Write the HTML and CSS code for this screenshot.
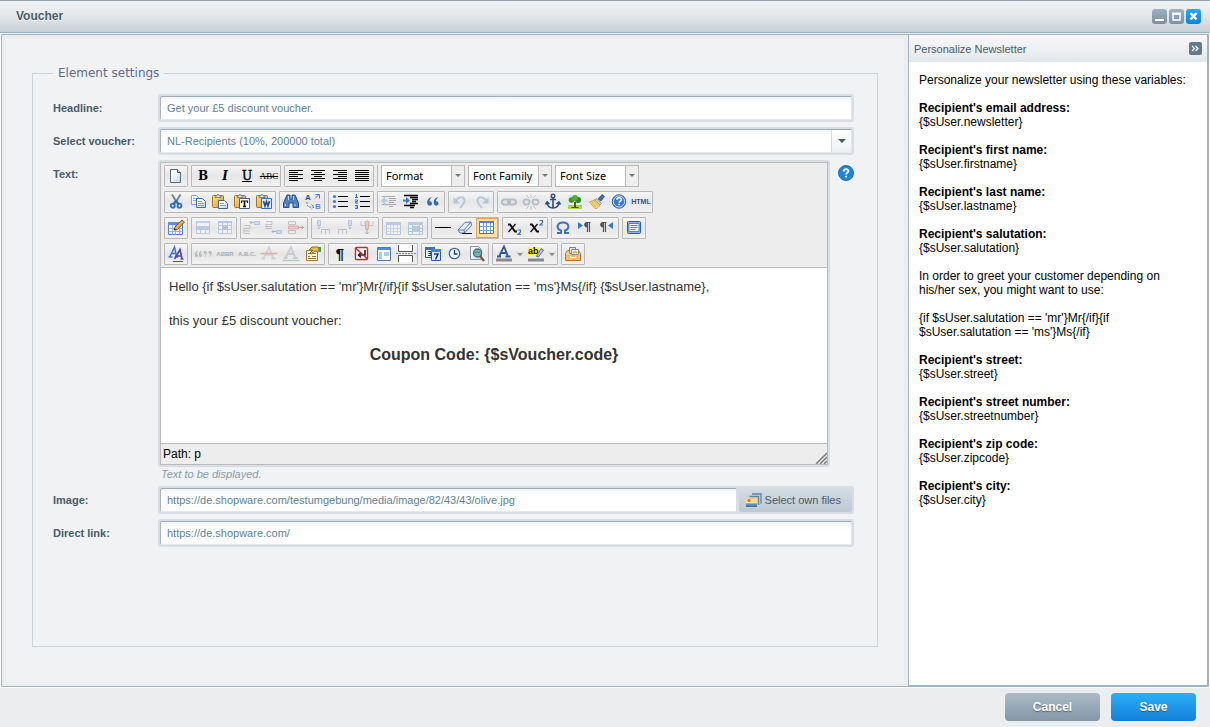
FILE: index.html
```html
<!DOCTYPE html>
<html lang="en">
<head>
<meta charset="utf-8">
<title>Voucher</title>
<link rel="stylesheet" href="styles.css">
</head>
<body>
<svg class="sprite" aria-hidden="true">
  <defs>
    <linearGradient id="g-page" x1="0" y1="0" x2="1" y2="1"><stop offset=".3" stop-color="#fff"/><stop offset="1" stop-color="#bdd3ea"/></linearGradient>
    <linearGradient id="g-sky" x1="0" y1="0" x2="0" y2="1"><stop offset="0" stop-color="#ffd24f"/><stop offset=".55" stop-color="#ffe9a8"/><stop offset=".6" stop-color="#6d9bd0"/><stop offset="1" stop-color="#3c6fae"/></linearGradient>
    <linearGradient id="g-clip" x1="0" y1="0" x2="1" y2="1"><stop offset="0" stop-color="#ffe28a"/><stop offset="1" stop-color="#d9982a"/></linearGradient>
    <symbol id="clipboard" viewBox="0 0 20 20"><rect x="2.500" y="3.500" width="11" height="12" rx="1" fill="url(#g-clip)" stroke="#a07424"/><path d="M5 5.500V4h1.500L8 2l1.500 2H11v1.500z" fill="#ddd" stroke="#777" stroke-width=".8"/></symbol>
    <symbol id="grid" viewBox="0 0 20 20"><path d="M2.500 4.500h14v12h-14z" fill="#fff" stroke="#4a7fc1"/><path d="M2 4h15v3H2z" fill="#5b8fd6"/><path d="M2.500 10.500h14M2.500 13.500h14M6.500 7v9.500M9.500 7v9.500M13.500 7v9.500" stroke="#8fb2e0" fill="none"/></symbol>
  </defs>
  <symbol id="i-new" viewBox="0 0 20 20"><path d="M4.500 3.500h7l3 3v10h-10z" fill="url(#g-page)" stroke="#536b88"/><path d="M11.500 3.500v3h3" fill="#fff" stroke="#344c69"/></symbol>
  <symbol id="i-left" viewBox="0 0 20 20"><path d="M3 4.500h14M3 6.500h9M3 8.500h14M3 10.500h9M3 12.500h14M3 14.500h9" stroke="#000"/></symbol>
  <symbol id="i-center" viewBox="0 0 20 20"><path d="M3 4.500h14M6 6.500h8M3 8.500h14M6 10.500h8M3 12.500h14M6 14.500h8" stroke="#000"/></symbol>
  <symbol id="i-right" viewBox="0 0 20 20"><path d="M3 4.500h14M8 6.500h9M3 8.500h14M8 10.500h9M3 12.500h14M8 14.500h9" stroke="#000"/></symbol>
  <symbol id="i-full" viewBox="0 0 20 20"><path d="M3 4.500h14M3 6.500h14M3 8.500h14M3 10.500h14M3 12.500h14M3 14.500h14" stroke="#000"/></symbol>
  <symbol id="i-cut" viewBox="0 0 20 20"><path d="M6 2.500l5.500 9M14.500 2.500L9 11.500" stroke="#7a8794" stroke-width="2" fill="none"/><path d="M10 8.500l3 4M10 8.500l-3 4" stroke="#2b6fb6" stroke-width="2"/><circle cx="6.800" cy="13.700" r="2" fill="none" stroke="#2b6fb6" stroke-width="1.800"/><circle cx="13.500" cy="13.700" r="2" fill="none" stroke="#2b6fb6" stroke-width="1.800"/></symbol>
  <symbol id="i-copy" viewBox="0 0 20 20"><path d="M3.500 3.500h5l3 3v6h-8z" fill="url(#g-page)" stroke="#7da3d8"/><path d="M5 6.500h4M5 8.500h4" stroke="#86aade"/><path d="M8.500 6.500h6l3 3v6h-9z" fill="url(#g-page)" stroke="#3a6cb5"/><path d="M10 9.500h4M10 11.500h6M10 13.500h6" stroke="#6f9bd8"/></symbol>
  <symbol id="i-paste" viewBox="0 0 20 20"><use href="#clipboard"/><path d="M8.500 8.500h6l3 3v5h-9z" fill="url(#g-page)" stroke="#48617c"/><path d="M10 11.500h4M10 13.500h6" stroke="#8aa3bf"/></symbol>
  <symbol id="i-pastetext" viewBox="0 0 20 20"><use href="#clipboard"/><path d="M7.500 6.500h10v10h-10z" fill="#fff" stroke="#48617c"/><path d="M9 9h7M9.500 8.500v2.500M15.500 8.500v2.500" stroke="#111" stroke-width="1.200"/><path d="M12.500 9v6M11 14.500h3" stroke="#111" stroke-width="1.600"/></symbol>
  <symbol id="i-pasteword" viewBox="0 0 20 20"><use href="#clipboard"/><path d="M7.500 6.500h10v10h-10z" fill="#dcecff" stroke="#3a6cb5"/><path d="M9.500 9l1.500 5 1.500-4.500L14 14l1.500-5" stroke="#1c4f9c" stroke-width="1.600" fill="none"/></symbol>
  <symbol id="i-find" viewBox="0 0 20 20"><path d="M6 3h3v4h2V3h3l3.500 8v4.500h-5.500V11h-4v4.500H2.500V11z" fill="#4d80c4" stroke="#264f8e"/><path d="M4.500 12v2M14 12v2M7.500 4v4M12.500 4v4" stroke="#c7ddf7"/></symbol>
  <symbol id="i-bullets" viewBox="0 0 20 20"><path d="M8 4.500h10M8 9.500h10M8 14.500h10" stroke="#000"/><circle cx="4.500" cy="4.500" r="1.600" fill="#4777c5"/><circle cx="4.500" cy="9.500" r="1.600" fill="#4777c5"/><circle cx="4.500" cy="14.500" r="1.600" fill="#4777c5"/></symbol>
  <symbol id="i-numbers" viewBox="0 0 20 20"><path d="M8 4.500h10M8 9.500h10M8 14.500h10" stroke="#000"/><path d="M4.500 2v4M3.500 3h1M3 5.500h3M3 8h2.500v1.500H3.500V11H6M3 13.500h2.500v3H3M3.500 15h2" stroke="#3c70c8" fill="none"/></symbol>
  <symbol id="i-outdent" viewBox="0 0 20 20"><path d="M3 4.500h13M10 6.500h7M10 8.500h7M10 10.500h5M3 12.500h14M10 14.500h4" stroke="#333"/><path d="M6 4.500v3h2.500v2H6v3l-4-4z" fill="#5788d0"/></symbol>
  <symbol id="i-indent" viewBox="0 0 20 20"><path d="M3 3.500h14M9 5.500h8M11 7.500h6M11 9.500h4M9 11.500h8M3 13.500h11M9 15.500h4" stroke="#000" stroke-width="1.300"/><path d="M5 5v2.500H2v2h3V12l4-3.500z" fill="#3c74d6"/></symbol>
  <symbol id="i-quote" viewBox="0 0 20 20"><path d="M9 5C5 6 3.500 9 4.500 12c1 2.500 4.500 2 4.500-.5C9 10 8 9 6.500 9.200 6.500 7.500 7.500 6.500 9 5zM15.500 5c-4 1-5.500 4-4.500 7 1 2.500 4.500 2 4.500-.5 0-1.500-1-2.500-2.500-2.300 0-1.700 1-2.700 2.500-4.200z" fill="#376aaf"/></symbol>
  <symbol id="i-undo" viewBox="0 0 20 20"><path d="M5.500 10C7 4.500 13.500 4 14.500 8c.6 3-2 5-4.500 8" fill="none" stroke="#5585c8" stroke-width="2"/><path d="M3.500 5v6.500H10z" fill="#5585c8"/></symbol>
  <symbol id="i-redo" viewBox="0 0 20 20"><path d="M14.500 10C13 4.500 6.500 4 5.500 8c-.6 3 2 5 4.500 8" fill="none" stroke="#5585c8" stroke-width="2"/><path d="M16.500 5v6.500H10z" fill="#5585c8"/></symbol>
  <symbol id="i-link" viewBox="0 0 20 20"><rect x="3" y="7.500" width="8" height="5" rx="2.500" fill="none" stroke="#5c6d81" stroke-width="2"/><rect x="9" y="7.500" width="8" height="5" rx="2.500" fill="none" stroke="#5c6d81" stroke-width="2"/></symbol>
  <symbol id="i-unlink" viewBox="0 0 20 20"><rect x="2.500" y="7.500" width="6" height="5" rx="2.500" fill="none" stroke="#5c6d81" stroke-width="1.800"/><rect x="11.500" y="7.500" width="6" height="5" rx="2.500" fill="none" stroke="#5c6d81" stroke-width="1.800"/><path d="M10 2v4M10 14v4M5 3l3 3M15 3l-3 3M5 17l3-3M15 17l-3-3" stroke="#777"/></symbol>
  <symbol id="i-anchor" viewBox="0 0 20 20"><circle cx="10" cy="4" r="1.800" fill="none" stroke="#304e7c" stroke-width="1.400"/><path d="M10 6v10M7 7.500h6M4 10.500c.5 4 3 5.500 6 5.500s5.500-1.500 6-5.500M2.500 12.500l1.700-2.500L6.500 12M13.500 12l2.300-2 1.700 2.500" fill="none" stroke="#304e7c" stroke-width="1.600"/></symbol>
  <symbol id="i-image" viewBox="0 0 20 20"><path d="M3 3h14v14H3z" fill="#d3ecf8"/><path d="M3 13h14v4H3z" fill="#a5d652"/><path d="M9 10h2v5.500H9z" fill="#754817"/><circle cx="6.500" cy="8" r="2.800" fill="#44921e"/><circle cx="13" cy="8" r="3" fill="#328011"/><circle cx="10" cy="6" r="3" fill="#56ab28"/><path d="M6.500 15.500h7" stroke="#3d5f16"/></symbol>
  <symbol id="i-cleanup" viewBox="0 0 20 20"><path d="M11 7l4-4.500 2.500 2L14 9z" fill="#496a9f" stroke="#2d4774" stroke-width=".7"/><path d="M9 6.500l5.500 5-1.500 1.500-5.500-5z" fill="#d2d5d8" stroke="#75797d" stroke-width=".7"/><path d="M7.500 8l5.500 5c-1 2-2.500 3-4.500 4L2.500 10z" fill="#fbdc82" stroke="#c39232" stroke-width=".8"/><path d="M5 10l4 5M7 9l4 5" stroke="#d2a03f" stroke-width=".8"/></symbol>
  <symbol id="i-help" viewBox="0 0 20 20"><circle cx="10" cy="9.500" r="6.800" fill="#3b7adb" stroke="#2158aa" stroke-width=".8"/><circle cx="10" cy="9.500" r="5.600" fill="none" stroke="#d5e3f7"/><path d="M7.900 7.800c0-2.600 4.400-2.600 4.400-.4 0 1.600-2.200 1.700-2.200 3.400M10.100 11.800v1.500" fill="none" stroke="#fff" stroke-width="1.500"/></symbol>
  <symbol id="i-table" viewBox="0 0 20 20"><use href="#grid"/><path d="M8 12l1-3 7-7 2.500 2-7 7.500z" fill="#e8a954" stroke="#784b25" stroke-width=".9"/><path d="M8 12l.5-1.800 1.500 1.200z" fill="#111"/></symbol>
  <symbol id="i-row" viewBox="0 0 20 20"><path d="M3.500 3.500h13v12h-13zM3.500 11.500h13M7.500 11v4.500M12.500 11v4.500" fill="#fff" stroke="#6689bd"/><path d="M3 3h14v2H3zM3 8h14v3H3z" fill="#5f92de"/></symbol>
  <symbol id="i-cell" viewBox="0 0 20 20"><path d="M3.500 3.500h13v12h-13zM3.500 7.500h13M3.500 11.500h13M7.500 5v10M12.500 5v10" fill="#fff" stroke="#6689bd"/><path d="M3 3h14v2H3zM8 8h5v3H8z" fill="#4c7fd6"/></symbol>
  <symbol id="i-rowbefore" viewBox="0 0 20 20"><path d="M2 7.500h6v3H2M2 10.500v5h6M2 13h6" fill="none" stroke="#777"/><path d="M12.500 3.500h5v3h-5z" fill="#9dc0ef" stroke="#4a78bd"/><path d="M12 4.500H8M9.500 3L8 4.500 9.500 6" fill="none" stroke="#444"/></symbol>
  <symbol id="i-rowafter" viewBox="0 0 20 20"><path d="M2 3.500h6v3H2M2 6.500v4h6M2 8.500h6" fill="none" stroke="#777"/><path d="M12.500 12.500h5v3h-5z" fill="#9dc0ef" stroke="#4a78bd"/><path d="M12 13.500H8M9.500 12L8 13.500 9.500 15" fill="none" stroke="#444"/></symbol>
  <symbol id="i-rowdel" viewBox="0 0 20 20"><path d="M2.500 3.500h7v3h-7zM2.500 12.500h7v3h-7z" fill="none" stroke="#777"/><path d="M2.500 8h10v3h-10z" fill="#ff8a70" stroke="#c33d2a"/><path d="M12 9.500h5.500M15.500 7.500l2 2-2 2" fill="none" stroke="#333"/></symbol>
  <symbol id="i-colbefore" viewBox="0 0 20 20"><path d="M4.500 2.500h3v5h-3z" fill="#9dc0ef" stroke="#4a78bd"/><path d="M6 8v3M4.500 9.500L6 11l1.500-1.500M8.500 16V11.500h8V16M12.500 12v4" fill="none" stroke="#777"/></symbol>
  <symbol id="i-colafter" viewBox="0 0 20 20"><path d="M13.500 2.500h3v5h-3z" fill="#9dc0ef" stroke="#4a78bd"/><path d="M15 8v3M13.500 9.500L15 11l1.500-1.500M3.500 16V11.500h8V16M7.500 12v4" fill="none" stroke="#777"/></symbol>
  <symbol id="i-coldel" viewBox="0 0 20 20"><path d="M4 3v4.500h4V3M12 3v4.500h4V3" fill="none" stroke="#777"/><path d="M8.500 3v8h3V3z" fill="#ff8a70" stroke="#c33d2a"/><path d="M10 11v5M8.500 14.500L10 16l1.500-1.500" fill="none" stroke="#333"/></symbol>
  <symbol id="i-split" viewBox="0 0 20 20"><use href="#grid"/></symbol>
  <symbol id="i-merge" viewBox="0 0 20 20"><path d="M2.500 4.500h14v12h-14zM2.500 10.500h14M2.500 13.500h14M6.500 7v9.500M13.500 7v9.500" fill="#fff" stroke="#4a7fc1"/><path d="M2 4h15v3H2zM7 8h6v6H7z" fill="#5b8fd6"/></symbol>
  <symbol id="i-rule" viewBox="0 0 20 20"><path d="M2 9.500h16" stroke="#000"/></symbol>
  <symbol id="i-eraser" viewBox="0 0 20 20"><path d="M3 12l7-7.500 6-.5.500 3.500-7 7.500H5z" fill="#e5effc" stroke="#5977a9"/><path d="M3 12h6l7-8M9 12l.5 3" fill="none" stroke="#5977a9"/><path d="M7 15.500h10" stroke="#111"/></symbol>
  <symbol id="i-lines" viewBox="0 0 20 20"><path d="M2.500 3.500h14v12h-14z" fill="#fff" stroke="#4373c5"/><path d="M2 3h15v2H2z" fill="#4a80d5"/><path d="M3 8.500h13M3 12.500h13M6.500 5v10M9.500 5v10M13.500 5v10" stroke="#6f97d8"/></symbol>
  <symbol id="i-sub" viewBox="0 0 20 20"><path d="M4 6.500h2l5 7h2" fill="none" stroke="#111" stroke-width="2"/><path d="M11.500 6l-7 8" fill="none" stroke="#111" stroke-width="1.300"/><path d="M13.500 12h3v2l-2.500 2.500h3" fill="none" stroke="#3e72c5" stroke-width="1.200"/></symbol>
  <symbol id="i-sup" viewBox="0 0 20 20"><path d="M4 6.500h2l5 7h2" fill="none" stroke="#111" stroke-width="2"/><path d="M11.500 6l-7 8" fill="none" stroke="#111" stroke-width="1.300"/><path d="M13.500 2.500h3v2L14 7h3" fill="none" stroke="#3e72c5" stroke-width="1.200"/></symbol>
  <symbol id="i-omega" viewBox="0 0 20 20"><path d="M4 15h4v-2.500C2.500 10.500 4 4.500 10 4.500s7.500 6 2 8V15h4" fill="none" stroke="#426fbd" stroke-width="2"/></symbol>
  <symbol id="i-ltr" viewBox="0 0 20 20"><path d="M3 4l5 3.500L3 11z" fill="#3d77c6"/><path d="M12.500 14V4.500M14.500 14V4.500M10.500 4.500h5" stroke="#555" stroke-width="1.200"/><path d="M12.500 4c-4.500 0-4.500 5.500 0 5.500z" fill="#555"/></symbol>
  <symbol id="i-rtl" viewBox="0 0 20 20"><path d="M16 4l-5 3.500 5 3.500z" fill="#3d77c6"/><path d="M6.500 14V4.500M8.500 14V4.500M4.500 4.500h5" stroke="#555" stroke-width="1.200"/><path d="M6.500 4C2 4 2 9.500 6.500 9.500z" fill="#555"/></symbol>
  <symbol id="i-screen" viewBox="0 0 20 20"><rect x="3.500" y="3.500" width="13" height="12" rx="1" fill="#8db4f0" stroke="#275aae"/><path d="M5 5.500h10v8H5z" fill="#eaf3ff" stroke="#4b83d8"/><path d="M6.500 7.500h7M6.500 9.500h7M6.500 11.500h5" stroke="#5787d2"/></symbol>
  <symbol id="i-style" viewBox="0 0 20 20"><path d="M2.500 13h4M9 13h3M4 12.500L8.500 3l2 9.500M6 9.500h4" fill="none" stroke="#3d78c8" stroke-width="1.500"/><path d="M8.500 15l5.500-9.500 2 9.500M10.500 12h5M14.500 15h3" fill="none" stroke="#5746b1" stroke-width="1.700"/><path d="M7 17.500h10" stroke="#5746b1"/></symbol>
  <symbol id="i-del" viewBox="0 0 20 20"><path d="M4.500 14.500L10 3.500l4.500 11M6.500 10.500h6M2.500 14.500h4M12 14.500h5" fill="none" stroke="#9aa6b6" stroke-width="1.800"/><path d="M1.500 9.500h17" stroke="#e0391b" stroke-width="1.400"/></symbol>
  <symbol id="i-ins" viewBox="0 0 20 20"><path d="M4.500 14L10 3l4.500 11M6.500 10h6M2.500 14h4M12 14h5" fill="none" stroke="#8a97a8" stroke-width="1.800"/><path d="M1.500 16.500h17" stroke="#3c9c4c" stroke-width="1.400"/></symbol>
  <symbol id="i-cite" viewBox="0 0 20 20"><path d="M4 7C1 8 1.500 13 3.500 13s2-3 0-3C3.500 9 4 8 5 7.500zM8 7c-3 1-2.500 6-.5 6s2-3 0-3C7.500 9 8 8 9 7.500zM11 7c2.500-.5 3 1 2.500 3S12 13 11 13c1-1 1.500-2 1.500-3-2 0-2.500-2.500-1.500-3zM16 7c2.500-.5 3 1 2.500 3S17 13 16 13c1-1 1.500-2 1.500-3-2 0-2.500-2.500-1.500-3z" fill="#57677c"/></symbol>
  <symbol id="i-props" viewBox="0 0 20 20"><path d="M3.500 6.500h11v10h-11z" fill="#fff6d8" stroke="#9a7c41"/><path d="M5 9.500h2M5 12.500h2M9 9.500h4M9 12.500h4M5 14.500h8" stroke="#8c7444"/><path d="M6 6l3-3h6l2 2-2 3-3-1-4 3-1-1 3-3z" fill="#f0bd4c" stroke="#956b1c"/><path d="M15 3h3v5h-2z" fill="#42a142"/></symbol>
  <symbol id="i-nbsp" viewBox="0 0 20 20"><rect x="3.500" y="3.500" width="12" height="12" rx="1" fill="#fff" stroke="#cd2733" stroke-width="1.400"/><path d="M13 6v5H6.500M9 8.500L6.500 11 9 13.500" fill="none" stroke="#222" stroke-width="1.600"/><path d="M3.500 4l12 11" stroke="#cd2733" stroke-width="1.400"/></symbol>
  <symbol id="i-template" viewBox="0 0 20 20"><path d="M3.500 3.500h13v13h-13z" fill="#fff" stroke="#4c7dac"/><path d="M4 4h12v2H4z" fill="#4d8fd3"/><path d="M5 8h3v7H5zM10 8h5v4h-5z" fill="#a6ccec"/></symbol>
  <symbol id="i-break" viewBox="0 0 20 20"><path d="M2.500 1v6.500h14V1M2.500 18v-6.500h14V18" fill="#fff" stroke="#555"/><path d="M0 9.500h20" stroke="#888" stroke-dasharray="2 1"/></symbol>
  <symbol id="i-date" viewBox="0 0 20 20"><path d="M2.500 3.500h9v10h-9z" fill="#e5efff" stroke="#2b569b"/><path d="M2 3h10v3H2z" fill="#426eb4"/><path d="M5 7.500h3v2H5.500M8 9.500v2H5" fill="none" stroke="#17396f"/><path d="M8.500 6.500h9v10h-9z" fill="#dceaff" stroke="#2b569b"/><path d="M8 5h10v3H8z" fill="#4a82d5"/><path d="M11 10h4l-2.500 5.500" fill="none" stroke="#17396f" stroke-width="1.500"/></symbol>
  <symbol id="i-time" viewBox="0 0 20 20"><circle cx="9.500" cy="9.500" r="5.200" fill="#f3f8ff" stroke="#3f67a8" stroke-width="1.300"/><path d="M9.500 6v4h3" fill="none" stroke="#1c3e77" stroke-width="1.300"/></symbol>
  <symbol id="i-preview" viewBox="0 0 20 20"><path d="M3.500 2.500h8l3 3v10h-11z" fill="url(#g-page)" stroke="#8293a7"/><circle cx="10.500" cy="9" r="4" fill="#78bbb9" stroke="#4e6a85" stroke-width="1.400"/><path d="M8 9c2-3 3 1 5-1" stroke="#357f35" fill="none"/><path d="M13 12l4 5" stroke="#805632" stroke-width="2.200"/></symbol>
  <symbol id="i-media" viewBox="0 0 20 20"><path d="M2.500 9.500l2-3h11l2 3v7h-15z" fill="#ffcf82" stroke="#b57226"/><path d="M6.500 3.500h6v6h-6z" fill="#d8e9ff" stroke="#5d85b8"/><path d="M8.500 5.500h7v5h-7z" fill="#fff" stroke="#7a8998"/><path d="M10 9l2-1.500 2.500 1.500" stroke="#efad22" stroke-width="1.600" fill="none"/><path d="M3 11h14v5H3z" fill="#f5bd6a"/><path d="M7.500 12v1.500h5V12" stroke="#fff" fill="none"/></symbol>
  <symbol id="i-fg" viewBox="0 0 20 20"><path d="M5 12.500L10 2.500l4 10M6.500 9h6M3 12.500h4M11.500 12.500h5" fill="none" stroke="#345998" stroke-width="1.800"/><path d="M2 14.500h16v3H2z" fill="#888"/></symbol>
</svg>

<div class="window">
  <header class="titlebar">
    <h1 class="titlebar-text">Voucher</h1>
    <div class="window-tools">
      <button class="window-tool" type="button" aria-label="Minimize"><svg viewBox="0 0 15 15"><path d="M3 10h9v2H3z" fill="#fff"/></svg></button>
      <button class="window-tool" type="button" aria-label="Maximize"><svg viewBox="0 0 15 15"><path d="M4 5h7v6H4z" fill="none" stroke="#fff" stroke-width="1.500"/><path d="M3 3.500h9v2H3z" fill="#fff"/></svg></button>
      <button class="window-tool close" type="button" aria-label="Close"><svg viewBox="0 0 15 15"><path d="M4.500 4l6 6.500M10.500 4l-6 6.500" stroke="#fff" stroke-width="2.500"/></svg></button>
    </div>
  </header>

  <div class="content">
    <main class="main">
      <form class="form" id="voucher-form">
        <fieldset class="settings">
          <legend class="legend">Element settings</legend>
          <div class="row">
            <label class="label" for="headline">Headline:</label>
            <div class="frame"><input class="input" id="headline" type="text" value="Get your £5 discount voucher."></div>
          </div>
          <div class="row">
            <label class="label" for="voucher">Select voucher:</label>
            <div class="frame combo">
              <select class="input" id="voucher"><option>NL-Recipients (10%, 200000 total)</option></select>
              <span class="trigger" aria-hidden="true"></span>
            </div>
          </div>
          <div class="row">
            <label class="label" id="text-label">Text:</label>
            <div class="editor-field">
              <div class="editor-line">
                <div class="editor-frame">
                  <div class="editor">
                    <div class="toolbar">
                      <div class="toolbar-row">
                        <div class="group"><button class="tool" type="button" aria-label="New document"><svg><use href="#i-new"/></svg></button></div>
                        <div class="group">
                          <button class="tool serif bold" type="button">B</button>
                          <button class="tool serif italic" type="button">I</button>
                          <button class="tool serif underline" type="button">U</button>
                          <button class="tool serif strike" type="button">ABC</button>
                        </div>
                        <div class="group">
                          <button class="tool" type="button" aria-label="Align left"><svg><use href="#i-left"/></svg></button>
                          <button class="tool" type="button" aria-label="Align center"><svg><use href="#i-center"/></svg></button>
                          <button class="tool" type="button" aria-label="Align right"><svg><use href="#i-right"/></svg></button>
                          <button class="tool" type="button" aria-label="Justify"><svg><use href="#i-full"/></svg></button>
                        </div>
                        <span class="separator"></span>
                        <div class="list"><select aria-label="Format"><option>Format</option></select><span class="list-arrow" aria-hidden="true"></span></div>
                        <div class="list"><select aria-label="Font family"><option>Font Family</option></select><span class="list-arrow" aria-hidden="true"></span></div>
                        <div class="list"><select aria-label="Font size"><option>Font Size</option></select><span class="list-arrow" aria-hidden="true"></span></div>
                      </div>
                      <div class="toolbar-row">
                        <div class="group">
                          <button class="tool" type="button" aria-label="Cut"><svg><use href="#i-cut"/></svg></button>
                          <button class="tool" type="button" aria-label="Copy"><svg><use href="#i-copy"/></svg></button>
                          <button class="tool" type="button" aria-label="Paste"><svg><use href="#i-paste"/></svg></button>
                          <button class="tool" type="button" aria-label="Paste as text"><svg><use href="#i-pastetext"/></svg></button>
                          <button class="tool" type="button" aria-label="Paste from Word"><svg><use href="#i-pasteword"/></svg></button>
                        </div>
                        <div class="group">
                          <button class="tool" type="button" aria-label="Find"><svg><use href="#i-find"/></svg></button>
                          <button class="tool" type="button" aria-label="Replace"><svg viewBox="0 0 20 20"><text x="2" y="8" class="glyph" font-size="8" fill="#264f8e">A</text><text x="12" y="17" class="glyph" font-size="8" fill="#5d8de0">B</text><path d="M12 6.500l3.500-3.500M12.500 2.500h4v4" stroke="#4379e0" fill="none"/><path d="M4 10v3l2 2h4M8.500 12.500l2.500 2.500-2.500 2" stroke="#4379e0" fill="none" stroke-dasharray="2 1"/></svg></button>
                        </div>
                        <div class="group">
                          <button class="tool" type="button" aria-label="Bullet list"><svg><use href="#i-bullets"/></svg></button>
                          <button class="tool" type="button" aria-label="Numbered list"><svg><use href="#i-numbers"/></svg></button>
                        </div>
                        <div class="group">
                          <button class="tool" type="button" aria-label="Outdent" disabled><svg><use href="#i-outdent"/></svg></button>
                          <button class="tool" type="button" aria-label="Indent"><svg><use href="#i-indent"/></svg></button>
                          <button class="tool" type="button" aria-label="Blockquote"><svg><use href="#i-quote"/></svg></button>
                        </div>
                        <div class="group">
                          <button class="tool" type="button" aria-label="Undo" disabled><svg><use href="#i-undo"/></svg></button>
                          <button class="tool" type="button" aria-label="Redo" disabled><svg><use href="#i-redo"/></svg></button>
                        </div>
                        <div class="group">
                          <button class="tool" type="button" aria-label="Link" disabled><svg><use href="#i-link"/></svg></button>
                          <button class="tool" type="button" aria-label="Unlink" disabled><svg><use href="#i-unlink"/></svg></button>
                          <button class="tool" type="button" aria-label="Anchor"><svg><use href="#i-anchor"/></svg></button>
                          <button class="tool" type="button" aria-label="Insert image"><svg><use href="#i-image"/></svg></button>
                          <button class="tool" type="button" aria-label="Clean up"><svg><use href="#i-cleanup"/></svg></button>
                          <button class="tool" type="button" aria-label="Editor help"><svg><use href="#i-help"/></svg></button>
                          <button class="tool html" type="button">HTML</button>
                        </div>
                      </div>
                      <div class="toolbar-row">
                        <div class="group"><button class="tool" type="button" aria-label="Insert table"><svg><use href="#i-table"/></svg></button></div>
                        <div class="group">
                          <button class="tool" type="button" aria-label="Row properties" disabled><svg><use href="#i-row"/></svg></button>
                          <button class="tool" type="button" aria-label="Cell properties" disabled><svg><use href="#i-cell"/></svg></button>
                        </div>
                        <div class="group">
                          <button class="tool" type="button" aria-label="Row before" disabled><svg><use href="#i-rowbefore"/></svg></button>
                          <button class="tool" type="button" aria-label="Row after" disabled><svg><use href="#i-rowafter"/></svg></button>
                          <button class="tool" type="button" aria-label="Delete row" disabled><svg><use href="#i-rowdel"/></svg></button>
                        </div>
                        <div class="group">
                          <button class="tool" type="button" aria-label="Column before" disabled><svg><use href="#i-colbefore"/></svg></button>
                          <button class="tool" type="button" aria-label="Column after" disabled><svg><use href="#i-colafter"/></svg></button>
                          <button class="tool" type="button" aria-label="Delete column" disabled><svg><use href="#i-coldel"/></svg></button>
                        </div>
                        <div class="group">
                          <button class="tool" type="button" aria-label="Split cells" disabled><svg><use href="#i-split"/></svg></button>
                          <button class="tool" type="button" aria-label="Merge cells" disabled><svg><use href="#i-merge"/></svg></button>
                        </div>
                        <div class="group">
                          <button class="tool" type="button" aria-label="Horizontal rule"><svg><use href="#i-rule"/></svg></button>
                          <button class="tool" type="button" aria-label="Remove formatting"><svg><use href="#i-eraser"/></svg></button>
                          <button class="tool active" type="button" aria-label="Guidelines"><svg><use href="#i-lines"/></svg></button>
                        </div>
                        <div class="group">
                          <button class="tool" type="button" aria-label="Subscript"><svg><use href="#i-sub"/></svg></button>
                          <button class="tool" type="button" aria-label="Superscript"><svg><use href="#i-sup"/></svg></button>
                        </div>
                        <div class="group">
                          <button class="tool" type="button" aria-label="Special character"><svg><use href="#i-omega"/></svg></button>
                          <button class="tool" type="button" aria-label="Left to right"><svg><use href="#i-ltr"/></svg></button>
                          <button class="tool" type="button" aria-label="Right to left"><svg><use href="#i-rtl"/></svg></button>
                        </div>
                        <div class="group"><button class="tool" type="button" aria-label="Fullscreen"><svg><use href="#i-screen"/></svg></button></div>
                      </div>
                      <div class="toolbar-row">
                        <div class="group"><button class="tool" type="button" aria-label="Edit style"><svg><use href="#i-style"/></svg></button></div>
                        <div class="group">
                          <button class="tool" type="button" aria-label="Citation" disabled><svg><use href="#i-cite"/></svg></button>
                          <button class="tool tiny" type="button" disabled>ABBR</button>
                          <button class="tool tiny" type="button" disabled>A.B.C.</button>
                          <button class="tool" type="button" aria-label="Deletion" disabled><svg><use href="#i-del"/></svg></button>
                          <button class="tool" type="button" aria-label="Insertion" disabled><svg><use href="#i-ins"/></svg></button>
                          <button class="tool" type="button" aria-label="Attributes"><svg><use href="#i-props"/></svg></button>
                        </div>
                        <div class="group">
                          <button class="tool pilcrow" type="button">¶</button>
                          <button class="tool" type="button" aria-label="Non-breaking space"><svg><use href="#i-nbsp"/></svg></button>
                          <button class="tool" type="button" aria-label="Template"><svg><use href="#i-template"/></svg></button>
                          <button class="tool" type="button" aria-label="Page break"><svg><use href="#i-break"/></svg></button>
                        </div>
                        <div class="group">
                          <button class="tool" type="button" aria-label="Insert date"><svg><use href="#i-date"/></svg></button>
                          <button class="tool" type="button" aria-label="Insert time"><svg><use href="#i-time"/></svg></button>
                          <button class="tool" type="button" aria-label="Preview"><svg><use href="#i-preview"/></svg></button>
                        </div>
                        <div class="group">
                          <button class="tool" type="button" aria-label="Text color"><svg><use href="#i-fg"/></svg></button>
                          <button class="tool drop" type="button" aria-label="More text colors"></button>
                          <button class="tool" type="button" aria-label="Highlight color"><svg viewBox="0 0 20 20"><path d="M2 3h11v8H2z" fill="#fff45a"/><text x="2" y="10" class="glyph" font-size="9" fill="#111">ab</text><path d="M10.500 12.500l4.500-8 2.500 1.500-5 7z" fill="#b5cdeb" stroke="#466aa0"/><path d="M2 14.500h16v3H2z" fill="#888"/></svg></button>
                          <button class="tool drop" type="button" aria-label="More highlight colors"></button>
                        </div>
                        <div class="group"><button class="tool" type="button" aria-label="Media"><svg><use href="#i-media"/></svg></button></div>
                      </div>
                    </div>
                    <div class="page" contenteditable="true" role="textbox" aria-multiline="true" aria-labelledby="text-label" spellcheck="false">
                      <p>Hello {if $sUser.salutation == 'mr'}Mr{/if}{if $sUser.salutation == 'ms'}Ms{/if} {$sUser.lastname},</p>
                      <p>this your £5 discount voucher:</p>
                      <h2>Coupon Code: {$sVoucher.code}</h2>
                    </div>
                    <div class="status">
                      <span>Path: p</span>
                      <svg class="grip" viewBox="0 0 12 12" aria-hidden="true"><path d="M1 12L12 1M5 12l7-7M9 12l3-3" stroke="#777" stroke-width="1.500"/></svg>
                    </div>
                  </div>
                </div>
                <button class="hint" type="button" aria-label="Help"><svg viewBox="0 0 16 16"><circle cx="8" cy="8" r="7.500" fill="#1b87dc" stroke="#1370bd"/><path d="M5.800 6.500C5.800 3.500 10.500 3.500 10.400 6.200 10.300 7.800 8.100 7.800 8.100 9.500M8.100 10.800v1.700" fill="none" stroke="#fff" stroke-width="1.800"/></svg></button>
              </div>
              <p class="help">Text to be displayed.</p>
            </div>
          </div>
          <div class="row">
            <label class="label" for="image">Image:</label>
            <div class="frame media">
              <input class="input" id="image" type="text" value="https://de.shopware.com/testumgebung/media/image/82/43/43/olive.jpg">
              <button class="pick" type="button">
                <svg viewBox="0 0 17 15" aria-hidden="true"><path d="M7 1h9v9.500M4.500 3.500h9V12" fill="none" stroke="#6380a8" stroke-width="1.300"/><path d="M1 5.500h11V14H1z" fill="url(#g-sky)"/><circle cx="4" cy="7.500" r="1.500" fill="#e8622a"/></svg>
                <span>Select own files</span>
              </button>
            </div>
          </div>
          <div class="row">
            <label class="label" for="link">Direct link:</label>
            <div class="frame"><input class="input" id="link" type="text" value="https://de.shopware.com/"></div>
          </div>
        </fieldset>
      </form>
    </main>

    <aside class="side">
      <div class="side-head">
        <h2 class="side-title">Personalize Newsletter</h2>
        <button class="collapse" type="button" aria-label="Collapse"><svg viewBox="0 0 13 13"><path d="M3 4l2.500 2.500L3 9M6.500 4L9 6.500 6.500 9" fill="none" stroke="#fff" stroke-width="1.200"/></svg></button>
      </div>
      <div class="side-body">
        <p>Personalize your newsletter using these variables:</p>
        <p><b>Recipient's email address:</b><br>{$sUser.newsletter}</p>
        <p><b>Recipient's first name:</b><br>{$sUser.firstname}</p>
        <p><b>Recipient's last name:</b><br>{$sUser.lastname}</p>
        <p><b>Recipient's salutation:</b><br>{$sUser.salutation}</p>
        <p>In order to greet your customer depending on his/her sex, you might want to use:</p>
        <p>{if $sUser.salutation == 'mr'}Mr{/if}{if $sUser.salutation == 'ms'}Ms{/if}</p>
        <p><b>Recipient's street:</b><br>{$sUser.street}</p>
        <p><b>Recipient's street number:</b><br>{$sUser.streetnumber}</p>
        <p><b>Recipient's zip code:</b><br>{$sUser.zipcode}</p>
        <p><b>Recipient's city:</b><br>{$sUser.city}</p>
      </div>
    </aside>
  </div>

  <footer class="footer">
    <button class="button cancel" type="button">Cancel</button>
    <button class="button save" type="submit" form="voucher-form">Save</button>
  </footer>
</div>
</body>
</html>
```
FILE: styles.css
```css
* { box-sizing: border-box; }

body {
  margin: 0;
  background: #ebedef;
  color: #475c6a;
  font: 11px/14px "Liberation Sans", Arial, sans-serif;
}

button, input, select { font: inherit; color: inherit; margin: 0; padding: 0; border: 0; }
button { cursor: pointer; }
select { appearance: none; }
p, h1, h2 { margin: 0; }

.sprite { position: absolute; width: 0; height: 0; }
.glyph { font-family: "Liberation Sans", Arial, sans-serif; font-weight: bold; }

.window { display: flex; flex-direction: column; min-height: 100vh; }

.titlebar {
  display: flex;
  align-items: center;
  justify-content: space-between;
  height: 33px;
  padding: 0 9px 2px 16px;
  border-top: 1px solid #91a5b5;
  border-bottom: 1px solid #9db0bf;
  background: linear-gradient(#f1f2f3, #e6e9eb 40%, #c8d0d7);
}
.titlebar-text { font-size: 12px; line-height: 16px; text-shadow: 0 1px 0 #fff; }
.window-tools { display: flex; gap: 2px; padding-top: 2px; }
.window-tool {
  width: 15px;
  height: 15px;
  border-radius: 3px;
  background: linear-gradient(#9fb0be, #7b91a3);
}
.window-tool.close { background: linear-gradient(#22abf7, #0a83dc); }
.window-tool svg { display: block; width: 15px; height: 15px; }

.content {
  flex: 1;
  display: flex;
  margin-top: 1px;
  border: 1px solid #fff;
  border-width: 0 1px;
}
.main {
  flex: 1;
  min-width: 0;
  display: flex;
  padding: 4px;
  border: 1px solid #a0b3c0;
  border-right: 0;
  border-radius: 2px 0 0 2px;
  background: #ebedef;
}
.form { flex: 1; min-width: 0; display: flex; padding: 26px 26px 35px; background: #f0f2f4; }

.settings {
  flex: 1;
  min-width: 0;
  margin: 0;
  padding: 13px 23px 0 20px;
  border: 1px solid #ccd3d8;
}
.legend {
  padding: 0 5px;
  color: #5f6b8a;
  font: 12px/16px "DejaVu Sans", Verdana, sans-serif;
}

.row { display: flex; margin-bottom: 5px; }
.label { flex: none; width: 105px; padding-top: 7px; font-weight: bold; }

.frame {
  flex: 1;
  min-width: 0;
  display: flex;
  height: 28px;
  padding: 2px;
  border-radius: 3px;
  background: #d7dde2;
}
.input {
  flex: 1;
  min-width: 0;
  width: 100%;
  padding: 0 6px;
  border: 1px solid #e4e8eb;
  border-top-color: #9fadb8;
  border-left-color: #a9b6c0;
  border-radius: 2px;
  background: linear-gradient(#f2f5f6, #fff 8px);
  color: #5f7f99;
}
.combo { position: relative; }
.trigger {
  position: absolute;
  top: 3px;
  right: 3px;
  bottom: 3px;
  width: 20px;
  border-left: 1px solid #d2d8dd;
  background: linear-gradient(#fff, #edf0f2);
  pointer-events: none;
}
.trigger::after {
  content: "";
  position: absolute;
  top: 9px;
  left: 6px;
  border: 4px solid transparent;
  border-top-color: #475c6a;
  border-bottom: 0;
}

.editor-field { flex: 1; min-width: 0; }
.editor-line { display: flex; gap: 8px; align-items: flex-start; }
.editor-frame { flex: 1; min-width: 0; padding: 2px; border-radius: 3px; background: #d7dde2; }
.editor { border: 1px solid #bbb; background: #fff; }
.hint { flex: none; width: 16px; height: 16px; margin-top: 5px; background: none; }
.hint svg { display: block; width: 16px; height: 16px; }

.toolbar {
  display: flex;
  flex-direction: column;
  gap: 4px;
  padding: 2px 3px;
  border-bottom: 1px solid #bbb;
  background: #ededed;
}
.toolbar-row { display: flex; gap: 3px; height: 22px; }
.group {
  display: flex;
  border: 1px solid #b8b8b8;
  border-radius: 1px;
  background: linear-gradient(#f6f6f6, #e6e6e6 50%, #f2f2f2);
}
.tool {
  display: flex;
  align-items: center;
  justify-content: center;
  width: 22px;
  height: 20px;
  background: none;
  color: #000;
}
.tool svg { display: block; width: 20px; height: 20px; }
.tool:disabled svg { opacity: 0.35; }
.serif { font: bold 12px/16px "DejaVu Serif", "Liberation Serif", serif; }
.italic { font-style: italic; }
.underline { font-weight: normal; text-decoration: underline; -webkit-text-stroke: 0.4px; }
.strike { font: 9px/12px "Liberation Serif", serif; text-decoration: line-through; }
.html { color: #2f5788; font: bold 7px/10px "Liberation Sans", Arial, sans-serif; }
.tiny { color: #a3adbb; font: bold 6px/10px "Liberation Sans", Arial, sans-serif; }
.pilcrow { font: bold 15px/16px "Liberation Sans", Arial, sans-serif; }
.active { background: #ffe2a3; box-shadow: inset 0 0 0 1px #e5a64c; }
.drop { width: 10px; }
.drop::before {
  content: "";
  border: 3px solid transparent;
  border-top-color: #888;
  border-bottom: 0;
}
.separator { width: 1px; background: #b8b8b8; }
.list { position: relative; width: 84px; border: 1px solid #b8b8b8; background: #fff; }
.list select {
  display: block;
  width: 100%;
  height: 20px;
  padding-left: 4px;
  background: none;
  color: #000;
  font: 11px/16px "Noto Sans", "Open Sans", sans-serif;
}
.list-arrow {
  position: absolute;
  top: 0;
  right: 0;
  bottom: 0;
  width: 13px;
  border-left: 1px solid #b8b8b8;
  background: #eee;
  pointer-events: none;
}
.list-arrow::after {
  content: "";
  position: absolute;
  top: 8px;
  left: 3px;
  border: 3px solid transparent;
  border-top-color: #777;
  border-bottom: 0;
}

.page {
  min-height: 175px;
  padding: 10px 8px;
  color: #333;
  font-size: 13px;
  line-height: 17px;
  outline: 0;
}
.page p { margin-bottom: 17px; }
.page h2 { font-size: 16px; line-height: 17px; text-align: center; }
.status {
  display: flex;
  justify-content: space-between;
  height: 21px;
  padding-left: 2px;
  border-top: 1px solid #bbb;
  background: #ededed;
  color: #000;
  font-size: 12px;
  line-height: 20px;
}
.grip { align-self: flex-end; width: 12px; height: 12px; }
.help { padding: 1px 0 0 3px; color: #8a9ba8; font-style: italic; line-height: 13px; }

.media .input { border-right: 0; border-radius: 2px 0 0 2px; }
.pick {
  flex: none;
  display: flex;
  align-items: center;
  gap: 3px;
  height: 24px;
  margin-left: 3px;
  padding: 0 11px 0 6px;
  border-radius: 3px;
  background: linear-gradient(#d6dde3, #bdc8d3);
}
.pick svg { flex: none; width: 17px; height: 15px; }

.side {
  flex: none;
  width: 301px;
  border: 1px solid #a0b3c0;
  border-right-width: 2px;
  border-bottom-width: 2px;
  background: #fff;
}
.side-head {
  display: flex;
  align-items: center;
  justify-content: space-between;
  height: 27px;
  padding: 0 5px;
  background: linear-gradient(#f8f8f9, #e4e7e9);
}
.side-title { font-size: 11px; font-weight: normal; }
.collapse { width: 13px; height: 13px; border-radius: 2px; background: #64798a; }
.collapse svg { display: block; width: 13px; height: 13px; }
.side-body { padding: 11px 10px; color: #000; font-size: 12px; line-height: 14px; }
.side-body p { margin-bottom: 14px; }

.footer {
  display: flex;
  justify-content: flex-end;
  gap: 11px;
  padding: 5px 14px 6px;
  border-top: 1px solid #fff;
  background: #ebedef;
}
.button {
  height: 28px;
  border-radius: 4px;
  color: #fff;
  font-size: 12px;
  font-weight: bold;
  text-shadow: 0 1px 1px rgba(0, 0, 0, 0.4);
}
.cancel { width: 95px; background: linear-gradient(#adbac6, #8397a7); }
.save { width: 85px; background: linear-gradient(#2bb0fa, #1380d8); }
```
